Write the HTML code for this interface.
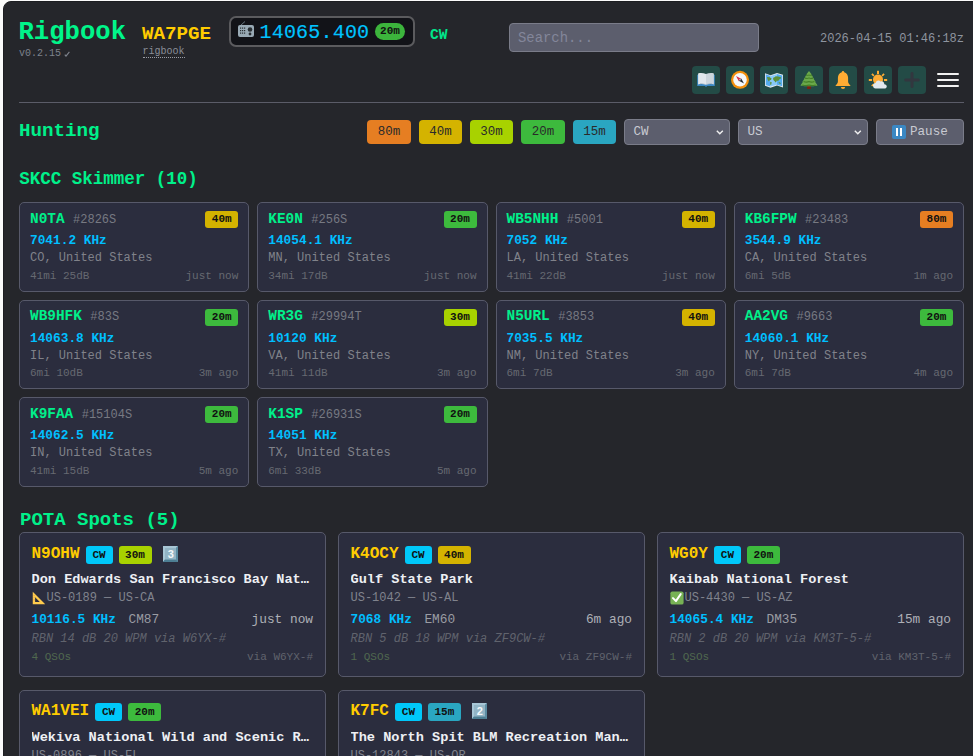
<!DOCTYPE html>
<html><head><meta charset="utf-8"><style>
*{box-sizing:border-box;margin:0;padding:0}
html,body{width:973px;height:756px;overflow:hidden;background:#fbfbfb}
body{font-family:"Liberation Mono",monospace;position:relative}
.app{position:absolute;left:3px;top:1px;width:990px;height:900px;background:#25262b;border:1px solid #1d1e22;border-radius:8px;overflow:hidden}
.t{position:absolute;white-space:nowrap;line-height:1}
.b{font-weight:bold}
.btn{position:absolute;top:66px;width:28px;height:28px;background:#234b46;border-radius:4px}
.btn svg{position:absolute;left:0;top:0;width:28px;height:28px}
.band{position:absolute;top:120px;height:24px;border-radius:4px;color:#2a2a2a;font-size:12.5px;line-height:24px;text-align:center}
.sel{position:absolute;top:119px;height:26px;background:#5c5e6d;border:1px solid #7a7c89;border-radius:4px;color:#c8cad2;font-size:12.6px;line-height:24px;padding-left:8.5px}
.chev{position:absolute;right:5.5px;top:10px;width:7.5px;height:5px}
.card{position:absolute;background:#2b2d3e;border:1px solid #57596a;border-radius:5px;overflow:hidden}
.bdg{position:absolute;font-weight:bold;color:#111;border-radius:3px;text-align:center}
</style></head>
<body><div class="app">
<div class="t b" style="left:14.5px;top:18.39px;font-size:25.6px;color:#00f58a;">Rigbook</div>
<div class="t" style="left:15px;top:47.34px;font-size:10px;color:#7d828c;">v0.2.15</div>
<svg style="position:absolute;left:59.5px;top:48.5px" width="6" height="6" viewBox="0 0 6 6"><path d="M0.8 3.6L2 5.2L5.4 0.9" stroke="#7d828c" stroke-width="1.1" fill="none"/></svg>
<div class="t b" style="left:138px;top:23.29px;font-size:19.2px;color:#ffcc00;">WA7PGE</div>
<div class="t" style="left:138.5px;top:45.34px;font-size:10px;color:#8a8e98;"><span style="border-bottom:1px dotted #9a9ca5">rigbook</span></div>
<div style="position:absolute;left:225px;top:14px;width:186px;height:31px;border:2px solid #5b5b5e;background:#121318;border-radius:7px"></div>
<svg style="position:absolute;left:233px;top:18px" width="18" height="18" viewBox="0 0 18 18">
<line x1="4" y1="5" x2="8" y2="1.5" stroke="#66757F" stroke-width="1"/>
<rect x="1" y="5" width="16" height="12" rx="2" fill="#99AAB5"/>
<g fill="#292F33"><rect x="3" y="7.5" width="1.2" height="1.2"/><rect x="5" y="7.5" width="1.2" height="1.2"/><rect x="7" y="7.5" width="1.2" height="1.2"/>
<rect x="3" y="10" width="1.2" height="1.2"/><rect x="5" y="10" width="1.2" height="1.2"/><rect x="7" y="10" width="1.2" height="1.2"/>
<rect x="3" y="12.5" width="1.2" height="1.2"/><rect x="5" y="12.5" width="1.2" height="1.2"/><rect x="7" y="12.5" width="1.2" height="1.2"/>
<circle cx="13" cy="9.5" r="2.3"/><circle cx="13" cy="14" r="1.4"/></g></svg>
<div class="t" style="left:255.5px;top:20.88px;font-size:20px;color:#00c3ff;letter-spacing:0.2px;-webkit-text-stroke:0.15px #00c3ff">14065.400</div>
<div class="bdg" style="left:371px;top:21px;width:30px;height:17px;border-radius:9px;background:#3cb43c;font-size:11px;line-height:17px;color:#111">20m</div>
<div class="t b" style="left:426px;top:26.01px;font-size:14.6px;color:#00e58a;">CW</div>
<div style="position:absolute;left:505px;top:21px;width:250px;height:29px;background:#5c5e6d;border:1px solid #7a7c89;border-radius:4px"></div>
<div class="t" style="left:514px;top:29.65px;font-size:13.9px;color:#83869a;">Search...</div>
<div class="t" style="left:816px;top:30.81px;font-size:12px;color:#8e949f;">2026-04-15 01:46:18z</div>
<div class="btn" style="left:688px;top:64px"><svg viewBox="0 0 28 28"><path fill="#3B88C3" d="M5.2 8.8h17.6v11.2h-7.6l-0.7 0.8h-1l-0.7-0.8H5.2z"/><path fill="#E1E8ED" d="M6.1 7.4c2.6-0.6 5.4-0.4 7.9 0.6v10.8c-2.5-0.8-5.3-0.9-7.9-0.3z"/><path fill="#CCD6DD" d="M21.9 7.4c-2.6-0.6-5.4-0.4-7.9 0.6v10.8c2.5-0.8 5.3-0.9 7.9-0.3z"/><path fill="#99AAB5" d="M8 17.6c1.8-0.3 3.6-0.2 5.2 0.4v0.5c-1.6-0.5-3.4-0.6-5.2-0.3zM20 17.6c-1.8-0.3-3.6-0.2-5.2 0.4v0.5c1.6-0.5 3.4-0.6 5.2-0.3z"/></svg></div>
<div class="btn" style="left:722px;top:64px"><svg viewBox="0 0 28 28"><circle cx="14" cy="13.8" r="9" fill="#F4900C"/><circle cx="14" cy="13.8" r="6.8" fill="#F5F8FA"/><path fill="#DD2E44" d="M10 10l5.2 2.8-2.4 2.4z"/><path fill="#292F33" d="M18 17.6l-5.2-2.8 2.4-2.4z"/><circle cx="14" cy="13.8" r="0.8" fill="#CCD6DD"/></svg></div>
<div class="btn" style="left:756.3px;top:64px"><svg viewBox="0 0 28 28"><path fill="#E1E8ED" d="M5 7.2l5.5 2 6.5-2.2 6 1.8v12.6l-6-1.8-6.5 2.2-5.5-2z"/><path fill="#55ACEE" d="M5.8 8.3l4.7 1.7v10.6l-4.7-1.7z M17 8.1l5.2 1.5v10.6l-5.2-1.5z"/><path fill="#88C9F9" d="M10.5 10l6.5-1.9v10.6l-6.5 1.9z"/><path fill="#5C913B" d="M7 11l2.8 0.2 1.8 1.3-0.6 1.4-1.4 0.3-0.8 1.2-1-1.5-0.6-1.6zM10.2 15.8l1.5 0.4-0.4 2.3-0.8 0.8-0.4-1.8zM13.2 11.7l1.3-0.4 1.3-1.1 2.5 0.2 2.7 0.8-0.3 1.6-1.6 0.8-1 1.6-1.2-0.6-0.5 1.1-0.9 0.9-0.8-1.3-1.1-1-0.5-1.3zM18.6 16l1.6 0.6 0.7 1-0.8 0.3-1.2-0.7z"/></svg></div>
<div class="btn" style="left:791px;top:64px"><svg viewBox="0 0 28 28"><rect x="12.1" y="19.9" width="3.8" height="3" rx="0.5" fill="#7C2210"/><path fill="#6AA84A" d="M14 4.9L16.4 8h-0.4l2 2.8h-0.5l1.6 2h-0.5l2.1 3.2h-0.5l2.4 3.4c-2.6 0.6-5.6 0.9-8.6 0.9s-6-0.3-8.6-0.9l2.4-3.4h-0.5l2.1-3.2h-0.5l1.6-2h-0.5l2-2.8h-0.4z"/><path fill="#447F26" d="M11.4 8.6c0.9 0.4 1.8 0.5 2.6 0 0.8 0.5 1.7 0.4 2.6 0l0.6 0.8c-1.1 0.5-2.2 0.6-3.2 0.1-1 0.5-2.1 0.4-3.2-0.1zM10.2 11.6c1.2 0.5 2.5 0.6 3.8 0 1.3 0.6 2.6 0.5 3.8 0l0.6 0.8c-1.4 0.6-3 0.7-4.4 0.2-1.4 0.5-3 0.4-4.4-0.2zM8.9 15c1.6 0.6 3.4 0.8 5.1 0.1 1.7 0.7 3.5 0.5 5.1-0.1l0.7 1c-1.9 0.7-3.9 0.9-5.8 0.3-1.9 0.6-3.9 0.4-5.8-0.3zM7.6 18.5c2 0.6 4.2 0.8 6.4 0.1 2.2 0.7 4.4 0.5 6.4-0.1l0.7 0.9c-2.3 0.7-4.7 0.9-7.1 0.4-2.4 0.5-4.8 0.3-7.1-0.4z"/></svg></div>
<div class="btn" style="left:825px;top:64px"><svg viewBox="0 0 28 28"><path fill="#FFAC33" d="M14 4.9c0.8 0 1.2 0.6 1.2 1.3 2.4 0.7 3.9 2.9 3.9 5.6v3.8c0 1.4 0.9 2.8 2.4 4.1v0.4H6.5v-0.4c1.5-1.3 2.4-2.7 2.4-4.1v-3.8c0-2.7 1.5-4.9 3.9-5.6 0-0.7 0.4-1.3 1.2-1.3z"/><path fill="#FFAC33" d="M11.9 21h4.2a2.1 2.1 0 0 1-4.2 0z"/></svg></div>
<div class="btn" style="left:860px;top:64px"><svg viewBox="0 0 28 28"><g fill="#FFAC33"><circle cx="14" cy="13.6" r="5"/><rect x="13" y="4.8" width="2" height="3.2" rx="0.3"/><rect x="4.8" y="13" width="3.2" height="2" rx="0.3"/><rect x="20" y="13" width="3.2" height="2" rx="0.3"/><path d="M7.3 8.4l1.2-1.2 2 2-1.2 1.2zM20.7 8.4l-1.2-1.2-2 2 1.2 1.2zM8.2 20.6l-1-1.2 2-1.8 1 1.2z"/></g><path fill="#E1E8ED" d="M20.3 18.2a2.8 2.8 0 0 0-3.9-2.7 2.8 2.8 0 0 0-4.8 1.6 2.7 2.7 0 0 0-2.6 2.7c0 1.5 1 2.8 2.6 2.8h8.6c1.5 0 2.6-1.2 2.6-2.2s-1-2.1-2.5-2.2z"/></svg></div>
<div class="btn" style="left:894px;top:64px"><svg viewBox="0 0 28 28"><path fill="#32373F" d="M14 6.1c0.8 0 1.5 0.6 1.5 1.5v4.9h4.8c0.8 0 1.5 0.7 1.5 1.5s-0.7 1.5-1.5 1.5h-4.8v4.9c0 0.8-0.7 1.5-1.5 1.5s-1.5-0.7-1.5-1.5v-4.9H7.7c-0.8 0-1.5-0.7-1.5-1.5s0.7-1.5 1.5-1.5h4.8V7.6c0-0.9 0.7-1.5 1.5-1.5z"/></svg></div>
<div style="position:absolute;left:933px;top:71px;width:22px;height:2px;background:#f2f2f2;border-radius:1px"></div>
<div style="position:absolute;left:933px;top:77px;width:22px;height:2px;background:#f2f2f2;border-radius:1px"></div>
<div style="position:absolute;left:933px;top:83px;width:22px;height:2px;background:#f2f2f2;border-radius:1px"></div>
<div style="position:absolute;left:15px;top:100px;width:945px;height:1px;background:#5b5c68"></div>
<div class="t b" style="left:15px;top:120.29px;font-size:19.2px;color:#00f08a;">Hunting</div>
<div class="band" style="left:363px;top:118px;width:44px;background:#e67e22">80m</div>
<div class="band" style="left:415px;top:118px;width:43px;background:#d4b300">40m</div>
<div class="band" style="left:466px;top:118px;width:43px;background:#a8d200">30m</div>
<div class="band" style="left:517px;top:118px;width:44px;background:#3dba3d">20m</div>
<div class="band" style="left:569px;top:118px;width:43px;background:#2aa6c1">15m</div>
<div class="sel" style="left:620px;top:117px;width:106px">CW<svg class="chev" viewBox="0 0 7.5 5"><path d="M0.8 0.8l3 3 3-3" stroke="#f0f0f0" stroke-width="1.4" fill="none"/></svg></div>
<div class="sel" style="left:734px;top:117px;width:130px">US<svg class="chev" viewBox="0 0 7.5 5"><path d="M0.8 0.8l3 3 3-3" stroke="#f0f0f0" stroke-width="1.4" fill="none"/></svg></div>
<div class="sel" style="left:872px;top:117px;width:88px;padding-left:33px">Pause<svg style="position:absolute;left:15px;top:5px" width="14" height="14" viewBox="0 0 14 14"><rect width="14" height="14" rx="2" fill="#3B88C3"/><rect x="4" y="3" width="2" height="8" fill="#fff"/><rect x="8" y="3" width="2" height="8" fill="#fff"/></svg></div>
<div class="t b" style="left:15.3px;top:168.59px;font-size:17.5px;color:#00f08a;">SKCC Skimmer (10)</div>
<div class="card" style="left:15.00px;top:200.00px;width:230.25px;height:89.5px"><div class="t b" style="left:10px;top:8.77px;font-size:14.4px;color:#00f08a;">N0TA<span style="font-weight:normal;font-size:12px;color:#777982;margin-left:8.5px">#2826S</span></div><div class="bdg" style="right:10px;top:8.2px;width:33px;height:17px;background:#d4b300;font-size:11px;line-height:17px">40m</div><div class="t b" style="left:10px;top:32.19px;font-size:12.8px;color:#00bfff;">7041.2 KHz</div><div class="t" style="left:10px;top:49.11px;font-size:12px;color:#80828a;">CO, United States</div><div class="t" style="left:10px;top:67.77px;font-size:11px;color:#666971;">41mi 25dB</div><div class="t" style="right:10px;top:67.77px;font-size:11px;color:#666971;">just now</div></div>
<div class="card" style="left:253.25px;top:200.00px;width:230.25px;height:89.5px"><div class="t b" style="left:10px;top:8.77px;font-size:14.4px;color:#00f08a;">KE0N<span style="font-weight:normal;font-size:12px;color:#777982;margin-left:8.5px">#256S</span></div><div class="bdg" style="right:10px;top:8.2px;width:33px;height:17px;background:#3dba3d;font-size:11px;line-height:17px">20m</div><div class="t b" style="left:10px;top:32.19px;font-size:12.8px;color:#00bfff;">14054.1 KHz</div><div class="t" style="left:10px;top:49.11px;font-size:12px;color:#80828a;">MN, United States</div><div class="t" style="left:10px;top:67.77px;font-size:11px;color:#666971;">34mi 17dB</div><div class="t" style="right:10px;top:67.77px;font-size:11px;color:#666971;">just now</div></div>
<div class="card" style="left:491.50px;top:200.00px;width:230.25px;height:89.5px"><div class="t b" style="left:10px;top:8.77px;font-size:14.4px;color:#00f08a;">WB5NHH<span style="font-weight:normal;font-size:12px;color:#777982;margin-left:8.5px">#5001</span></div><div class="bdg" style="right:10px;top:8.2px;width:33px;height:17px;background:#d4b300;font-size:11px;line-height:17px">40m</div><div class="t b" style="left:10px;top:32.19px;font-size:12.8px;color:#00bfff;">7052 KHz</div><div class="t" style="left:10px;top:49.11px;font-size:12px;color:#80828a;">LA, United States</div><div class="t" style="left:10px;top:67.77px;font-size:11px;color:#666971;">41mi 22dB</div><div class="t" style="right:10px;top:67.77px;font-size:11px;color:#666971;">just now</div></div>
<div class="card" style="left:729.75px;top:200.00px;width:230.25px;height:89.5px"><div class="t b" style="left:10px;top:8.77px;font-size:14.4px;color:#00f08a;">KB6FPW<span style="font-weight:normal;font-size:12px;color:#777982;margin-left:8.5px">#23483</span></div><div class="bdg" style="right:10px;top:8.2px;width:33px;height:17px;background:#e67e22;font-size:11px;line-height:17px">80m</div><div class="t b" style="left:10px;top:32.19px;font-size:12.8px;color:#00bfff;">3544.9 KHz</div><div class="t" style="left:10px;top:49.11px;font-size:12px;color:#80828a;">CA, United States</div><div class="t" style="left:10px;top:67.77px;font-size:11px;color:#666971;">6mi 5dB</div><div class="t" style="right:10px;top:67.77px;font-size:11px;color:#666971;">1m ago</div></div>
<div class="card" style="left:15.00px;top:297.50px;width:230.25px;height:89.5px"><div class="t b" style="left:10px;top:8.77px;font-size:14.4px;color:#00f08a;">WB9HFK<span style="font-weight:normal;font-size:12px;color:#777982;margin-left:8.5px">#83S</span></div><div class="bdg" style="right:10px;top:8.2px;width:33px;height:17px;background:#3dba3d;font-size:11px;line-height:17px">20m</div><div class="t b" style="left:10px;top:32.19px;font-size:12.8px;color:#00bfff;">14063.8 KHz</div><div class="t" style="left:10px;top:49.11px;font-size:12px;color:#80828a;">IL, United States</div><div class="t" style="left:10px;top:67.77px;font-size:11px;color:#666971;">6mi 10dB</div><div class="t" style="right:10px;top:67.77px;font-size:11px;color:#666971;">3m ago</div></div>
<div class="card" style="left:253.25px;top:297.50px;width:230.25px;height:89.5px"><div class="t b" style="left:10px;top:8.77px;font-size:14.4px;color:#00f08a;">WR3G<span style="font-weight:normal;font-size:12px;color:#777982;margin-left:8.5px">#29994T</span></div><div class="bdg" style="right:10px;top:8.2px;width:33px;height:17px;background:#a8d200;font-size:11px;line-height:17px">30m</div><div class="t b" style="left:10px;top:32.19px;font-size:12.8px;color:#00bfff;">10120 KHz</div><div class="t" style="left:10px;top:49.11px;font-size:12px;color:#80828a;">VA, United States</div><div class="t" style="left:10px;top:67.77px;font-size:11px;color:#666971;">41mi 11dB</div><div class="t" style="right:10px;top:67.77px;font-size:11px;color:#666971;">3m ago</div></div>
<div class="card" style="left:491.50px;top:297.50px;width:230.25px;height:89.5px"><div class="t b" style="left:10px;top:8.77px;font-size:14.4px;color:#00f08a;">N5URL<span style="font-weight:normal;font-size:12px;color:#777982;margin-left:8.5px">#3853</span></div><div class="bdg" style="right:10px;top:8.2px;width:33px;height:17px;background:#d4b300;font-size:11px;line-height:17px">40m</div><div class="t b" style="left:10px;top:32.19px;font-size:12.8px;color:#00bfff;">7035.5 KHz</div><div class="t" style="left:10px;top:49.11px;font-size:12px;color:#80828a;">NM, United States</div><div class="t" style="left:10px;top:67.77px;font-size:11px;color:#666971;">6mi 7dB</div><div class="t" style="right:10px;top:67.77px;font-size:11px;color:#666971;">3m ago</div></div>
<div class="card" style="left:729.75px;top:297.50px;width:230.25px;height:89.5px"><div class="t b" style="left:10px;top:8.77px;font-size:14.4px;color:#00f08a;">AA2VG<span style="font-weight:normal;font-size:12px;color:#777982;margin-left:8.5px">#9663</span></div><div class="bdg" style="right:10px;top:8.2px;width:33px;height:17px;background:#3dba3d;font-size:11px;line-height:17px">20m</div><div class="t b" style="left:10px;top:32.19px;font-size:12.8px;color:#00bfff;">14060.1 KHz</div><div class="t" style="left:10px;top:49.11px;font-size:12px;color:#80828a;">NY, United States</div><div class="t" style="left:10px;top:67.77px;font-size:11px;color:#666971;">6mi 7dB</div><div class="t" style="right:10px;top:67.77px;font-size:11px;color:#666971;">4m ago</div></div>
<div class="card" style="left:15.00px;top:395.00px;width:230.25px;height:89.5px"><div class="t b" style="left:10px;top:8.77px;font-size:14.4px;color:#00f08a;">K9FAA<span style="font-weight:normal;font-size:12px;color:#777982;margin-left:8.5px">#15104S</span></div><div class="bdg" style="right:10px;top:8.2px;width:33px;height:17px;background:#3dba3d;font-size:11px;line-height:17px">20m</div><div class="t b" style="left:10px;top:32.19px;font-size:12.8px;color:#00bfff;">14062.5 KHz</div><div class="t" style="left:10px;top:49.11px;font-size:12px;color:#80828a;">IN, United States</div><div class="t" style="left:10px;top:67.77px;font-size:11px;color:#666971;">41mi 15dB</div><div class="t" style="right:10px;top:67.77px;font-size:11px;color:#666971;">5m ago</div></div>
<div class="card" style="left:253.25px;top:395.00px;width:230.25px;height:89.5px"><div class="t b" style="left:10px;top:8.77px;font-size:14.4px;color:#00f08a;">K1SP<span style="font-weight:normal;font-size:12px;color:#777982;margin-left:8.5px">#26931S</span></div><div class="bdg" style="right:10px;top:8.2px;width:33px;height:17px;background:#3dba3d;font-size:11px;line-height:17px">20m</div><div class="t b" style="left:10px;top:32.19px;font-size:12.8px;color:#00bfff;">14051 KHz</div><div class="t" style="left:10px;top:49.11px;font-size:12px;color:#80828a;">TX, United States</div><div class="t" style="left:10px;top:67.77px;font-size:11px;color:#666971;">6mi 33dB</div><div class="t" style="right:10px;top:67.77px;font-size:11px;color:#666971;">5m ago</div></div>
<div class="t b" style="left:16px;top:509.14px;font-size:19px;color:#00f08a;">POTA Spots (5)</div>
<div class="card" style="left:15.00px;top:530.00px;width:307px;height:144.5px"><div class="t b" style="left:11.5px;top:12.74px;font-size:16px;color:#ffcc00;">N9OHW</div><div class="bdg" style="left:65.5px;top:12.6px;width:27px;height:18px;background:#00c8fa;font-size:11px;line-height:18px">CW</div><div class="bdg" style="left:98.5px;top:12.6px;width:33px;height:18px;background:#a8d200;font-size:11px;line-height:18px">30m</div><div style="position:absolute;left:142.5px;top:12.6px;width:15px;height:16px"><svg style="position:absolute;left:0;top:0" width="15" height="16" viewBox="0 0 15 16"><rect width="15" height="16" rx="0.8" fill="#5F8FA5"/><path fill="#A8C6D6" d="M0 0h15l-2 2H2v11.5L0 16z"/><path fill="#4D7E93" d="M0 16h15l-2-2.5H2z"/><path fill="#5C8CA2" d="M15 0v16l-2-2.5V2z"/><rect x="2" y="2" width="11" height="11.5" fill="#92B4C5"/><text x="7.7" y="12.2" font-family="Liberation Sans" font-weight="bold" font-size="11" fill="#f4f8fa" text-anchor="middle">3</text></svg></div><div class="t b" style="left:11.5px;top:40.18px;font-size:13.6px;color:#eef0f4;width:281px;overflow:hidden;text-overflow:ellipsis">Don Edwards San Francisco Bay National Wildlife Refuge</div><div class="t" style="left:11.5px;top:59.31px;font-size:12px;color:#80838d;"><svg width="14" height="14" viewBox="0 0 36 36" style="position:absolute;left:0;top:-1px"><path fill="#FFCC4D" d="M2 2v32h32z"/><path fill="#2b2d3e" d="M8 16v12h12z"/><path fill="#C1694F" d="M4 10h3v1.5H4zM4 16h3v1.5H4zM4 22h3v1.5H4z" opacity=".6"/></svg><span style="padding-left:15px">US-0189 — US-CA</span></div><div class="t b" style="left:11.5px;top:80.99px;font-size:12.8px;color:#00bfff;">10116.5 KHz<span style="font-weight:normal;color:#9a9ca3;margin-left:12.5px">CM87</span></div><div class="t" style="right:12px;top:80.99px;font-size:12.8px;color:#aeb0b6;">just now</div><div class="t" style="left:11.5px;top:99.51px;font-size:12px;color:#60636d;font-style:italic">RBN 14 dB 20 WPM via W6YX-#</div><div class="t" style="left:11.5px;top:118.77px;font-size:11px;color:#50684f;">4 QSOs</div><div class="t" style="right:12px;top:118.77px;font-size:11px;color:#60636d;">via W6YX-#</div></div>
<div class="card" style="left:334.00px;top:530.00px;width:307px;height:144.5px"><div class="t b" style="left:11.5px;top:12.74px;font-size:16px;color:#ffcc00;">K4OCY</div><div class="bdg" style="left:65.5px;top:12.6px;width:27px;height:18px;background:#00c8fa;font-size:11px;line-height:18px">CW</div><div class="bdg" style="left:98.5px;top:12.6px;width:33px;height:18px;background:#d4b300;font-size:11px;line-height:18px">40m</div><div class="t b" style="left:11.5px;top:40.18px;font-size:13.6px;color:#eef0f4;width:281px;overflow:hidden;text-overflow:ellipsis">Gulf State Park</div><div class="t" style="left:11.5px;top:59.31px;font-size:12px;color:#80838d;"><span style="padding-left:0px">US-1042 — US-AL</span></div><div class="t b" style="left:11.5px;top:80.99px;font-size:12.8px;color:#00bfff;">7068 KHz<span style="font-weight:normal;color:#9a9ca3;margin-left:12.5px">EM60</span></div><div class="t" style="right:12px;top:80.99px;font-size:12.8px;color:#aeb0b6;">6m ago</div><div class="t" style="left:11.5px;top:99.51px;font-size:12px;color:#60636d;font-style:italic">RBN 5 dB 18 WPM via ZF9CW-#</div><div class="t" style="left:11.5px;top:118.77px;font-size:11px;color:#50684f;">1 QSOs</div><div class="t" style="right:12px;top:118.77px;font-size:11px;color:#60636d;">via ZF9CW-#</div></div>
<div class="card" style="left:653.00px;top:530.00px;width:307px;height:144.5px"><div class="t b" style="left:11.5px;top:12.74px;font-size:16px;color:#ffcc00;">WG0Y</div><div class="bdg" style="left:55.9px;top:12.6px;width:27px;height:18px;background:#00c8fa;font-size:11px;line-height:18px">CW</div><div class="bdg" style="left:88.9px;top:12.6px;width:33px;height:18px;background:#3dba3d;font-size:11px;line-height:18px">20m</div><div class="t b" style="left:11.5px;top:40.18px;font-size:13.6px;color:#eef0f4;width:281px;overflow:hidden;text-overflow:ellipsis">Kaibab National Forest</div><div class="t" style="left:11.5px;top:59.31px;font-size:12px;color:#80838d;"><svg width="14" height="14" viewBox="0 0 36 36" style="position:absolute;left:0.5px;top:-1px"><rect x="1" y="1" width="34" height="34" rx="5" fill="#77B255"/><path fill="#fff" d="M29 6a2.5 2.5 0 0 0-3.5.6L14.8 22l-5.3-5.3a2.5 2.5 0 1 0-3.5 3.5l7.5 7.5a2.5 2.5 0 0 0 3.8-.3l12.3-18a2.5 2.5 0 0 0-.6-3.4z"/></svg><span style="padding-left:15px">US-4430 — US-AZ</span></div><div class="t b" style="left:11.5px;top:80.99px;font-size:12.8px;color:#00bfff;">14065.4 KHz<span style="font-weight:normal;color:#9a9ca3;margin-left:12.5px">DM35</span></div><div class="t" style="right:12px;top:80.99px;font-size:12.8px;color:#aeb0b6;">15m ago</div><div class="t" style="left:11.5px;top:99.51px;font-size:12px;color:#60636d;font-style:italic">RBN 2 dB 20 WPM via KM3T-5-#</div><div class="t" style="left:11.5px;top:118.77px;font-size:11px;color:#50684f;">1 QSOs</div><div class="t" style="right:12px;top:118.77px;font-size:11px;color:#60636d;">via KM3T-5-#</div></div>
<div class="card" style="left:15.00px;top:687.50px;width:307px;height:144.5px"><div class="t b" style="left:11.5px;top:12.74px;font-size:16px;color:#ffcc00;">WA1VEI</div><div class="bdg" style="left:75.1px;top:12.6px;width:27px;height:18px;background:#00c8fa;font-size:11px;line-height:18px">CW</div><div class="bdg" style="left:108.1px;top:12.6px;width:33px;height:18px;background:#3dba3d;font-size:11px;line-height:18px">20m</div><div class="t b" style="left:11.5px;top:40.18px;font-size:13.6px;color:#eef0f4;width:281px;overflow:hidden;text-overflow:ellipsis">Wekiva National Wild and Scenic River</div><div class="t" style="left:11.5px;top:59.31px;font-size:12px;color:#80838d;"><span style="padding-left:0px">US-0896 — US-FL</span></div></div>
<div class="card" style="left:334.00px;top:687.50px;width:307px;height:144.5px"><div class="t b" style="left:11.5px;top:12.74px;font-size:16px;color:#ffcc00;">K7FC</div><div class="bdg" style="left:55.9px;top:12.6px;width:27px;height:18px;background:#00c8fa;font-size:11px;line-height:18px">CW</div><div class="bdg" style="left:88.9px;top:12.6px;width:33px;height:18px;background:#2aa6c1;font-size:11px;line-height:18px">15m</div><div style="position:absolute;left:132.9px;top:12.6px;width:15px;height:16px"><svg style="position:absolute;left:0;top:0" width="15" height="16" viewBox="0 0 15 16"><rect width="15" height="16" rx="0.8" fill="#5F8FA5"/><path fill="#A8C6D6" d="M0 0h15l-2 2H2v11.5L0 16z"/><path fill="#4D7E93" d="M0 16h15l-2-2.5H2z"/><path fill="#5C8CA2" d="M15 0v16l-2-2.5V2z"/><rect x="2" y="2" width="11" height="11.5" fill="#92B4C5"/><text x="7.7" y="12.2" font-family="Liberation Sans" font-weight="bold" font-size="11" fill="#f4f8fa" text-anchor="middle">2</text></svg></div><div class="t b" style="left:11.5px;top:40.18px;font-size:13.6px;color:#eef0f4;width:281px;overflow:hidden;text-overflow:ellipsis">The North Spit BLM Recreation Management Area</div><div class="t" style="left:11.5px;top:59.31px;font-size:12px;color:#80838d;"><span style="padding-left:0px">US-12843 — US-OR</span></div></div>
</div></body></html>
